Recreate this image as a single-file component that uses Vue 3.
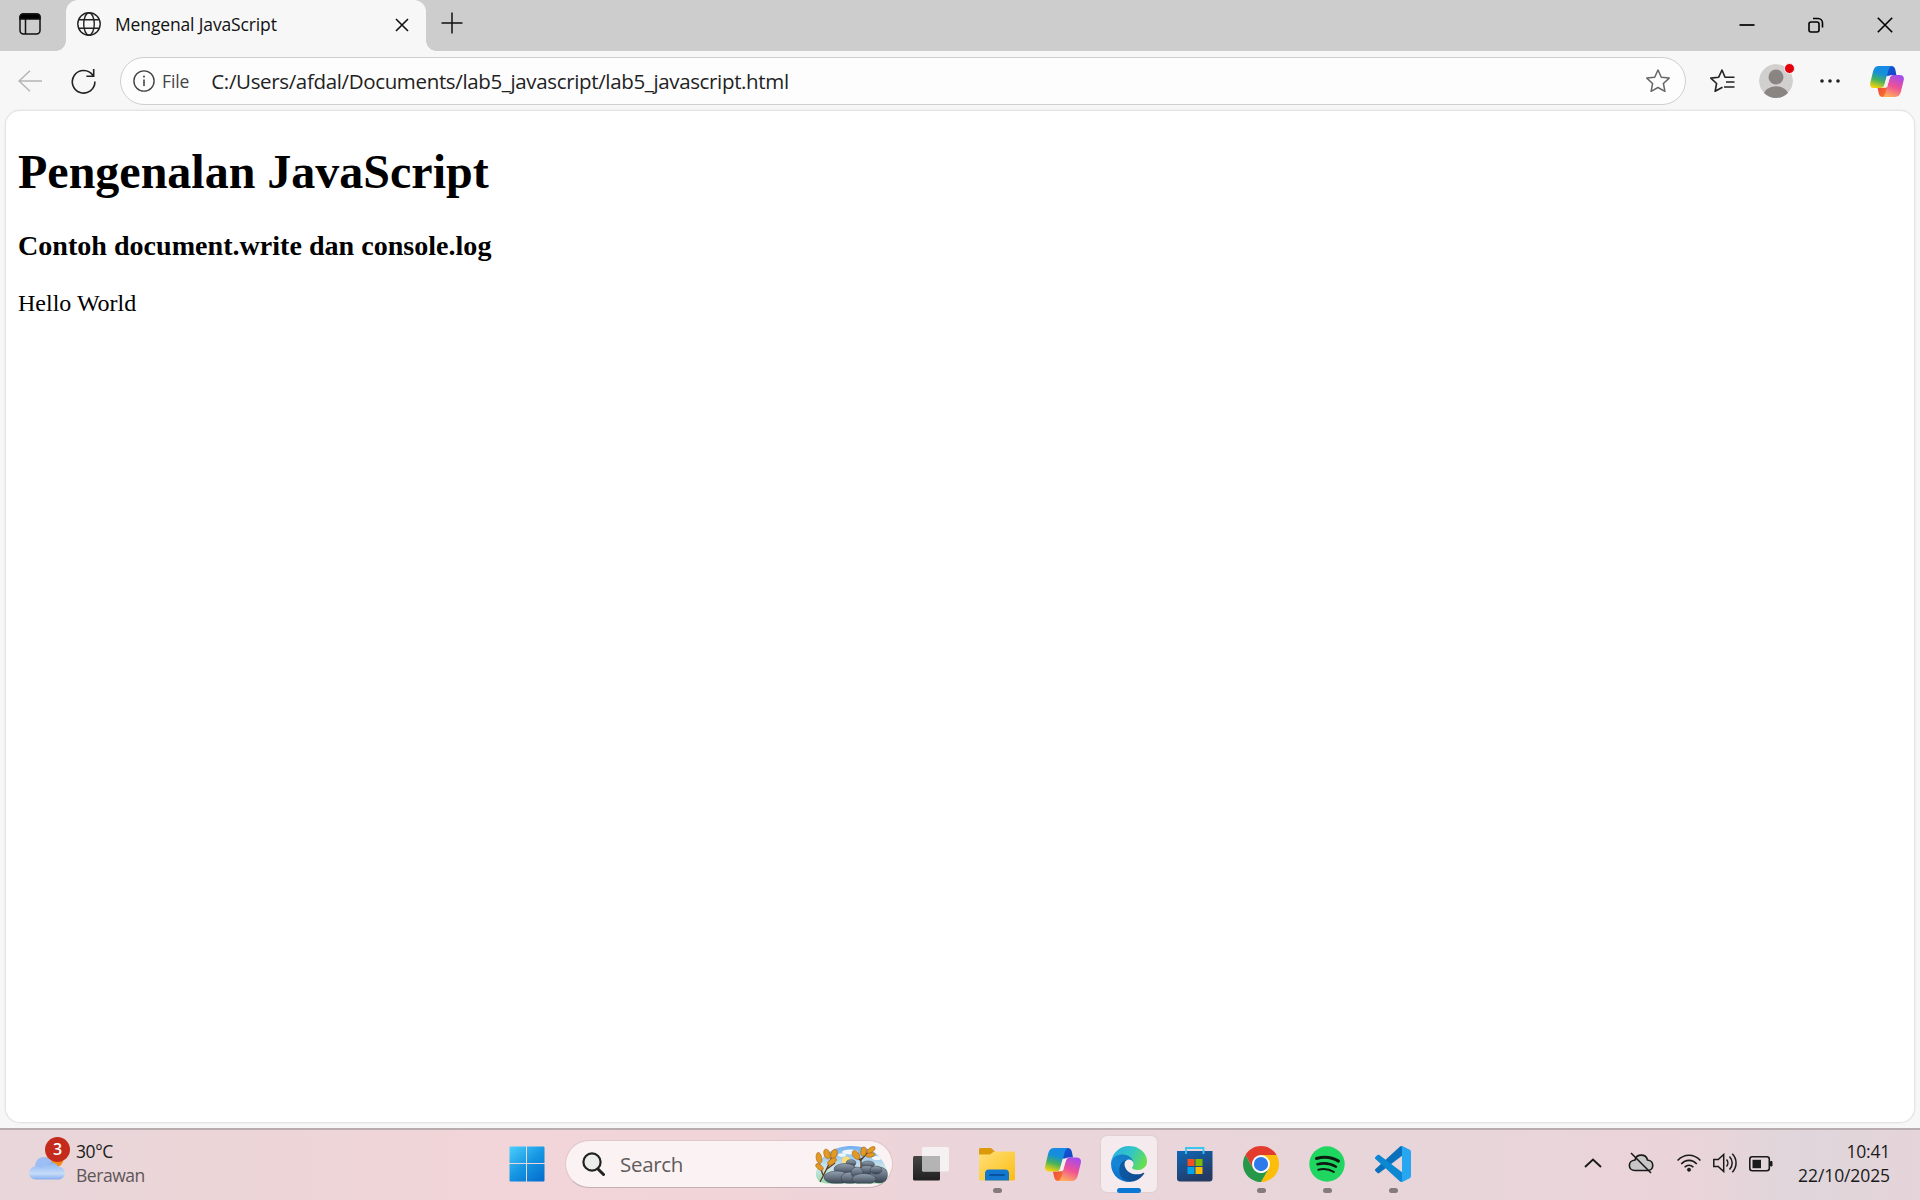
<script setup>
const url = 'C:/Users/afdal/Documents/lab5_javascript/lab5_javascript.html'
</script>

<template>
  <div class="screen">
    <svg width="0" height="0" class="defs" aria-hidden="true">
      <defs>
        <linearGradient id="cpA" x1="0.6" y1="0" x2="0.3" y2="1">
          <stop offset="0" stop-color="#1789e8" /><stop offset=".35" stop-color="#168fd8" />
          <stop offset=".65" stop-color="#45b15e" /><stop offset="1" stop-color="#f5d20b" />
        </linearGradient>
        <linearGradient id="cpB" x1="0.7" y1="0" x2="0.3" y2="1">
          <stop offset="0" stop-color="#a34cf0" /><stop offset=".5" stop-color="#ee5096" />
          <stop offset="1" stop-color="#ffb05a" />
        </linearGradient>
        <linearGradient id="cpC" x1="0" y1="0" x2="1" y2="1">
          <stop offset="0" stop-color="#0d5bd6" /><stop offset="1" stop-color="#1a3fc4" />
        </linearGradient>
        <linearGradient id="cpD" x1="0" y1="0" x2="1" y2="1">
          <stop offset="0" stop-color="#e8453f" /><stop offset="1" stop-color="#fb7b2c" />
        </linearGradient>
        <symbol id="copilot" viewBox="0 0 36 33">
          <path d="M17 0h5.500c2.600 0 3.800 1.500 4.400 4L28 9.500h-4.500c-2.500 0-4 1-5 4z" fill="url(#cpC)" />
          <path d="M19 33h-5.500c-2.600 0-3.800-1.500-4.400-4L8 23.500h4.500c2.500 0 4-1 5-4z" fill="url(#cpD)" />
          <path d="M9.500 0H24c-2.400 0-3.600 1.600-4.400 4.500l-4.200 15c-.8 2.800-2 4-4.400 4H4.500c-3.700 0-5.200-2.300-4.200-6L3.200 5.500C4.200 1.800 6 0 9.500 0z" fill="url(#cpA)" />
          <path d="M26.500 33H12c2.400 0 3.600-1.600 4.400-4.500l4.200-15c.8-2.800 2-4 4.400-4h6.500c3.700 0 5.200 2.300 4.200 6l-2.900 12c-1 3.700-2.800 5.500-6.300 5.500z" fill="url(#cpB)" />
          <path d="M19.500 10.500h2.600c-.7.800-1.100 1.700-1.500 3l-2.400 8.200c-.4 1-.9 1.500-1.800 1.500h-2.800c.9-.8 1.400-2 1.800-3.700l2-7.200c.4-1.200 1-1.800 2.100-1.800z" fill="#f6eef1" />
        </symbol>
      </defs>
    </svg>

    <header class="titlebar">
      <div class="workspace">
        <svg width="22" height="22" viewBox="0 0 22 22" fill="none" stroke="#111" stroke-width="1.500">
          <rect x="1" y="1" width="20" height="20" rx="3.500" /><path d="M6.500 6v15" />
          <path d="M1 6V4a3 3 0 0 1 3-3h14a3 3 0 0 1 3 3v2z" fill="#000" />
        </svg>
      </div>
      <div class="tab">
        <svg width="24" height="24" viewBox="0 0 24 24" fill="none" stroke="#222" stroke-width="1.400">
          <circle cx="12" cy="12" r="11.200" /><ellipse cx="12" cy="12" rx="5.300" ry="11.200" />
          <path d="M2 7.700h20M2 16.300h20" />
        </svg>
        <span class="tab-title">Mengenal JavaScript</span>
        <svg class="tab-close" width="14" height="14" viewBox="0 0 14 14" stroke="#111" stroke-width="1.600"><path d="M1 1l12 12M13 1L1 13" /></svg>
      </div>
      <svg class="plus" width="22" height="22" viewBox="0 0 22 22" stroke="#111" stroke-width="1.500"><path d="M11 .5v21M.5 11h21" /></svg>
      <div class="controls">
        <svg width="16" height="16" viewBox="0 0 16 16"><path d="M.5 8h15" stroke="#000" stroke-width="1.700" /></svg>
        <svg width="16" height="16" viewBox="0 0 16 16" fill="none" stroke="#000" stroke-width="1.600">
          <rect x="1" y="5" width="10" height="10" rx="2" /><path d="M5 1.500h5a4.500 4.500 0 0 1 4.500 4.500v4.500" />
        </svg>
        <svg width="16" height="16" viewBox="0 0 16 16" stroke="#000" stroke-width="1.600"><path d="M.8.8l14.400 14.400M15.200.8L.8 15.200" /></svg>
      </div>
    </header>

    <nav class="toolbar">
      <svg class="back" width="24" height="22" viewBox="0 0 24 22" fill="none" stroke="#b5b5b5" stroke-width="1.500"><path d="M24 11H1M12 .7L1 11l11 10.300" /></svg>
      <svg class="reload" width="25" height="26" viewBox="0 0 25 26" fill="none" stroke="#222" stroke-width="1.600">
        <path d="M23.900 13.500A11.300 11.300 0 1 1 22 7.500M22.700 1v7.300h-7.300" />
      </svg>
      <div class="address">
        <svg width="22" height="22" viewBox="0 0 22 22" fill="none" stroke="#444" stroke-width="1.400"><circle cx="11" cy="11" r="10.100" /><path d="M11 9.500v6.500" stroke-width="1.600" /><circle cx="11" cy="6.600" r=".4" /></svg>
        <span class="scheme">File</span>
        <span class="url">{{ url }}</span>
        <svg class="fav" width="24" height="24" viewBox="0 0 24 24" fill="none" stroke="#666" stroke-width="1.500" stroke-linejoin="round">
          <path d="M12 1l3.300 7.200 7.900.9-5.800 5.400 1.500 7.800L12 18.500l-6.900 3.800 1.500-7.800L.8 9.100l7.900-.9z" />
        </svg>
      </div>
      <svg class="favs" width="25" height="24" viewBox="0 0 25 24" fill="none" stroke="#222" stroke-width="1.600" stroke-linejoin="round">
        <path d="M24.500 8.200H15L12 1 8.700 8.200l-7.900.9 5.800 5.400-1.500 7.800 7.400-4M16 13h8.500M14 18h10.500" />
      </svg>
      <div class="avatar">
        <svg width="34" height="34" viewBox="0 0 34 34">
          <defs><clipPath id="av"><circle cx="17" cy="17" r="17" /></clipPath></defs>
          <g clip-path="url(#av)"><circle cx="17" cy="17" r="17" fill="#d2d0ce" /><circle cx="17" cy="13" r="7.500" fill="#8a8583" /><ellipse cx="17" cy="32" rx="12.500" ry="9.800" fill="#8a8583" /></g>
        </svg>
        <i class="dot"></i>
      </div>
      <svg class="more" width="20" height="4" viewBox="0 0 20 4" fill="#222"><circle cx="2" cy="2" r="1.800" /><circle cx="10" cy="2" r="1.800" /><circle cx="18" cy="2" r="1.800" /></svg>
      <svg class="cp" width="34" height="31"><use href="#copilot" /></svg>
    </nav>

    <main class="page">
      <h1>Pengenalan JavaScript</h1>
      <h3>Contoh document.write dan console.log</h3>
      <p>Hello World</p>
    </main>

    <footer class="taskbar">
      <div class="weather">
        <div class="weather-icon">
          <svg width="36" height="28" viewBox="0 0 36 28">
            <defs><linearGradient id="cl" x1="0" y1="0" x2="0" y2="1"><stop offset="0" stop-color="#8db4f5" /><stop offset=".65" stop-color="#c5dcf8" /><stop offset="1" stop-color="#86aef0" /></linearGradient></defs>
            <circle cx="26" cy="6" r="8.500" fill="#f58a1a" />
            <path d="M7 26a7 7 0 0 1-1-12.500C6.500 7 10.500 4 15 4c4 0 7 2.500 8 5z" fill="#9dbdf5" />
            <path d="M7 26.500c-9 0-9-13 0-13 3 0 4 .8 6 2 2.500-7 14-8 16-2 9 .5 9 13 0 13z" fill="url(#cl)" />
          </svg>
          <b class="badge">3</b>
        </div>
        <div class="weather-text"><span class="temp">30°C</span><span class="cond">Berawan</span></div>
      </div>

      <div class="apps">
        <div class="app">
          <svg width="36" height="36" viewBox="0 0 36 36">
            <defs><linearGradient id="wn" gradientUnits="userSpaceOnUse" x1="0" y1="0" x2="30" y2="36"><stop offset="0" stop-color="#4dd0fd" /><stop offset=".55" stop-color="#1595e2" /><stop offset="1" stop-color="#0670cf" /></linearGradient></defs>
            <path fill="url(#wn)" d="M1.500.5H17V17H.5V1.500a1 1 0 0 1 1-1zM18 .5h16.500a1 1 0 0 1 1 1V17H18zM.5 18H17v17.500H1.500a1 1 0 0 1-1-1zM18 18h17.500v16.500a1 1 0 0 1-1 1H18z" />
          </svg>
        </div>
        <div class="search">
          <svg width="23" height="24" viewBox="0 0 23 24" fill="#ececec" stroke="#222" stroke-width="2.200"><path d="M16 17l5.500 5.500" stroke-width="3" stroke-linecap="round" /><circle cx="10" cy="10" r="8.600" /></svg>
          <span class="search-label">Search</span>
          <svg class="scene" width="75" height="40" viewBox="0 0 75 40">
            <defs>
              <linearGradient id="sky" x1="0" y1="0" x2="0" y2="1"><stop offset="0" stop-color="#69aaf0" /><stop offset=".6" stop-color="#cfe6ea" /><stop offset="1" stop-color="#8fd9a8" /></linearGradient>
              <linearGradient id="rk" x1="0" y1="0" x2="0" y2="1"><stop offset="0" stop-color="#96a1b0" /><stop offset=".5" stop-color="#667282" /><stop offset="1" stop-color="#353f4c" /></linearGradient>
              <clipPath id="sc"><path d="M2 28C5 12 19 2 38 2c18 0 29 8 35 24 2 8-1 13.500-7 13.500H13C6 39.500 1 35 2 28z" /></clipPath>
            </defs>
            <g clip-path="url(#sc)">
              <rect width="75" height="40" fill="url(#sky)" />
              <g fill="#fff" opacity=".85"><ellipse cx="36" cy="8" rx="8" ry="2.500" /><ellipse cx="28" cy="11" rx="4" ry="1.800" /><ellipse cx="63" cy="14" rx="5" ry="2" /></g>
              <circle cx="32" cy="16.500" r="4" fill="#f9dd75" />
              <g fill="url(#rk)" stroke="#323c49" stroke-width=".5">
                <ellipse cx="37" cy="19" rx="4.800" ry="3.300" /><ellipse cx="31" cy="25" rx="11" ry="5.500" /><ellipse cx="54" cy="20.500" rx="6.500" ry="3.500" /><ellipse cx="53" cy="26" rx="8" ry="4.500" />
                <ellipse cx="23" cy="33.500" rx="13" ry="6.500" /><ellipse cx="36" cy="34" rx="9" ry="6" /><ellipse cx="43" cy="28.500" rx="6" ry="5.500" /><ellipse cx="65" cy="31" rx="9" ry="8" /><ellipse cx="50" cy="35" rx="12" ry="5.500" /><ellipse cx="62" cy="26" rx="6" ry="4" />
              </g>
            </g>
            <g fill="none" stroke="#5a3a20" stroke-width="1.300"><path d="M6 38c4-8 8-14 12-26M9 31L5 20M13 25l8-6M47 24V14M47 16l8-9M47 17l-6-6" /></g>
            <g fill="#e39a25" stroke="#a9640f" stroke-width=".6">
              <ellipse cx="13" cy="10" rx="3" ry="5" transform="rotate(-20 13 10)" /><ellipse cx="20" cy="10" rx="3" ry="5" transform="rotate(20 20 10)" /><ellipse cx="5" cy="14" rx="2.800" ry="5.500" transform="rotate(-10 5 14)" /><ellipse cx="18" cy="17.500" rx="2.600" ry="5" transform="rotate(55 18 17.500)" /><ellipse cx="5.500" cy="23" rx="2.400" ry="4.500" transform="rotate(-50 5.500 23)" />
              <ellipse cx="42" cy="11" rx="3" ry="5" transform="rotate(-35 42 11)" /><ellipse cx="49.500" cy="7.500" rx="2.700" ry="4.500" transform="rotate(8 49.500 7.500)" /><ellipse cx="57" cy="6" rx="2.300" ry="4.800" transform="rotate(55 57 6)" /><ellipse cx="56.500" cy="11" rx="2.100" ry="4.500" transform="rotate(80 56.500 11)" />
            </g>
          </svg>
        </div>
        <div class="app">
          <svg width="36" height="36" viewBox="0 0 36 36">
            <defs><linearGradient id="tv" x1="0" y1="0" x2="0" y2="1"><stop offset="0" stop-color="#454545" /><stop offset="1" stop-color="#202020" /></linearGradient></defs>
            <rect x="0" y="10" width="27" height="24.500" rx="1.500" fill="url(#tv)" /><rect x="9" y="1" width="27" height="24.500" rx="1.500" fill="#f7f7f7" opacity=".78" /><path d="M9 10h18v15.500H10.500A1.500 1.500 0 0 1 9 24z" fill="#b4b4b4" />
          </svg>
        </div>
        <div class="app">
          <svg width="36" height="36" viewBox="0 0 36 36">
            <defs><linearGradient id="fo" x1="0" y1="0" x2="1" y2="1"><stop offset="0" stop-color="#ffe07a" /><stop offset="1" stop-color="#fcbd13" /></linearGradient></defs>
            <path d="M0 3.500A1.500 1.500 0 0 1 1.500 2H12L16 5.500v8H0z" fill="#dc9a0b" /><path d="M0 8.500h11l4-3h19.500A1.500 1.500 0 0 1 36 7v26a1.500 1.500 0 0 1-1.500 1.500h-33A1.500 1.500 0 0 1 0 33z" fill="url(#fo)" />
            <path d="M6 34.500v-7a4 4 0 0 1 4-4h16a4 4 0 0 1 4 4v7z" fill="#1277cf" /><path d="M11 29h14" stroke="#07539e" stroke-width="1.800" stroke-linecap="round" />
          </svg>
          <i class="run"></i>
        </div>
        <div class="app"><svg width="36" height="33"><use href="#copilot" /></svg></div>
        <div class="app active">
          <svg width="36" height="36" viewBox="0 0 256 256">
            <defs>
              <linearGradient id="e1" x1="0" y1="0" x2="1" y2="0"><stop offset="0" stop-color="#0c59a4" /><stop offset="1" stop-color="#114a8b" /></linearGradient>
              <linearGradient id="e2" x1=".7" y1="0" x2=".3" y2="1"><stop offset="0" stop-color="#1478c0" /><stop offset=".5" stop-color="#1687d8" /><stop offset="1" stop-color="#0c6cc6" /></linearGradient>
              <linearGradient id="e3" x1="0" y1=".2" x2="1" y2=".6"><stop offset="0" stop-color="#2aaee0" /><stop offset=".5" stop-color="#32c5c8" /><stop offset="1" stop-color="#68e04c" /></linearGradient>
            </defs>
            <path transform="translate(-4.630 -4.920)" fill="url(#e2)" d="M110.340 246.340A79.200 79.200 0 0 1 87.600 225a80.720 80.720 0 0 1 29.530-120c3.120-1.470 8.450-4.130 15.540-4a32.350 32.350 0 0 1 25.690 13 31.880 31.880 0 0 1 6.360 18.660c0-.21 24.460-79.600-80-79.600-43.900 0-80 41.660-80 78.210a130.150 130.150 0 0 0 12.110 56 128 128 0 0 0 156.380 67.110 75.550 75.550 0 0 1-62.780-8z" />
            <path transform="translate(-4.630 -4.920)" fill="url(#e1)" d="M235.680 195.460a93.730 93.730 0 0 1-10.540 4.710 101.870 101.870 0 0 1-35.900 6.460c-47.320 0-88.540-32.550-88.540-74.320A31.480 31.480 0 0 1 117.130 105c-42.800 1.800-53.800 46.400-53.800 72.530 0 73.880 68.090 81.370 82.760 81.370 7.910 0 19.840-2.300 27-4.560l1.310-.44a128.340 128.340 0 0 0 66.600-52.800 4 4 0 0 0-5.320-5.640z" />
            <path fill="url(#e3)" d="M152.330 148.860c-.81 1.050-3.300 2.500-3.300 5.660 0 2.610 1.700 5.120 4.720 7.230 14.380 10 41.490 8.680 41.560 8.680a59.560 59.560 0 0 0 30.270-8.350A61.380 61.380 0 0 0 256 109.200c.26-22.410-8-37.310-11.340-43.910C223.460 23.840 177.720 0 128 0A128 128 0 0 0 0 126.200c.48-36.540 36.800-66.050 80-66.050 3.500 0 23.460.34 42 10.070 16.340 8.580 24.900 18.940 30.850 29.210 6.180 10.670 7.280 24.150 7.280 29.520s-2.740 13.330-7.800 19.910z" />
          </svg>
          <i class="run"></i>
        </div>
        <div class="app">
          <svg width="36" height="36" viewBox="0 0 36 36">
            <defs><linearGradient id="st" x1="0" y1="0" x2=".5" y2="1"><stop offset="0" stop-color="#0f68b8" /><stop offset="1" stop-color="#243a63" /></linearGradient></defs>
            <path d="M0 5h35.500v27.500A3 3 0 0 1 32.500 35.500H3A3 3 0 0 1 0 32.500z" fill="url(#st)" /><path d="M9 8V2h17.500v6" fill="none" stroke="#39c4f2" stroke-width="1.800" />
            <path fill="#f25022" d="M10.500 13h7v7h-7z" /><path fill="#7fba00" d="M18.500 13h7v7h-7z" /><path fill="#00a4ef" d="M10.500 21h7v7h-7z" /><path fill="#ffb900" d="M18.500 21h7v7h-7z" />
          </svg>
        </div>
        <div class="app">
          <svg width="36" height="36" viewBox="0 0 48 48">
            <path fill="#e33b2e" d="M24 12h20.780A24 24 0 0 0 3.220 12l10.390 18z" /><path fill="#fdbd0b" d="M34.390 30L24 48A24 24 0 0 0 44.780 12H24z" /><path fill="#279847" d="M13.610 30L3.220 12A24 24 0 0 0 24 48l10.390-18A12 12 0 0 1 13.610 30z" />
            <circle cx="24" cy="24" r="12" fill="#fff" /><circle cx="24" cy="24" r="9.500" fill="#2f7aea" />
          </svg>
          <i class="run"></i>
        </div>
        <div class="app">
          <svg width="36" height="36" viewBox="0 0 36 36" fill="none" stroke="#0d1a10" stroke-linecap="round">
            <circle cx="18" cy="18" r="17.700" fill="#1fd760" stroke="none" />
            <path d="M7.500 12.500c7-2 15.500-1.200 22 2.600" stroke-width="3" /><path d="M8.500 18.300c6-1.600 13-.9 18.500 2.400" stroke-width="2.500" /><path d="M9.300 23.700c5-1.200 10.800-.6 15.500 2.200" stroke-width="2" />
          </svg>
          <i class="run"></i>
        </div>
        <div class="app">
          <svg width="36" height="36" viewBox="0 0 100 100">
            <path fill="#0a72bd" d="M96.460 10.800L75.860.87A6.230 6.230 0 0 0 68.750 2.080L1.300 63.580a4.170 4.170 0 0 0 0 6.170l5.510 5.010a4.170 4.170 0 0 0 5.320.24L93.360 13.370A4.130 4.130 0 0 1 100 16.670v-.24a6.250 6.250 0 0 0-3.540-5.630z" />
            <path fill="#0c87d1" d="M96.460 89.200L75.860 99.130A6.230 6.230 0 0 1 68.750 97.920L1.300 36.420a4.170 4.170 0 0 1 0-6.170l5.510-5.010a4.170 4.170 0 0 1 5.320-.24L93.360 86.630A4.130 4.130 0 0 0 100 83.330v.24a6.250 6.250 0 0 1-3.540 5.630z" />
            <path fill="#27a7f2" d="M75.860 99.130A6.230 6.230 0 0 1 68.750 97.920C71.060 100.220 75 98.590 75 95.330V4.670C75 1.410 71.060-.22 68.750 2.080A6.230 6.230 0 0 1 75.860.87L96.460 10.770A6.250 6.250 0 0 1 100 16.400V83.600a6.250 6.250 0 0 1-3.540 5.630z" />
          </svg>
          <i class="run"></i>
        </div>
      </div>

      <div class="tray">
        <svg class="chev" width="18" height="10" viewBox="0 0 18 10" fill="none" stroke="#1a1a1a" stroke-width="1.900"><path d="M1 9l8-7.500L17 9" /></svg>
        <svg class="cloud" width="26" height="22" viewBox="0 0 26 22" fill="none" stroke="#1a1a1a" stroke-width="1.600">
          <path d="M7 18.500c-7.500 0-7.500-10 0-10.500 1.500-6.500 11-6.500 12.500 0 7 .5 7 10.500 0 10.500z" fill="#c9c6c8" /><path d="M3 1l20 20" />
        </svg>
        <svg class="wifi" width="24" height="18" viewBox="0 0 24 18" fill="none" stroke="#1a1a1a" stroke-width="1.600"><path d="M.6 6.500c6.500-7 16.300-7 22.800 0M4.200 10c4.500-4.800 11.100-4.800 15.600 0M7.600 13.300c2.600-2.700 6.200-2.700 8.800 0" /><circle cx="12" cy="15.700" r="1.600" fill="#1a1a1a" stroke-width=".8" /></svg>
        <svg class="vol" width="24" height="20" viewBox="0 0 24 20" fill="none" stroke="#1a1a1a" stroke-width="1.500"><path d="M.8 6.500h4.400l5.500-5v17l-5.500-5H.8zM13.500 6.500c1.800 2 1.800 5 0 7M16.500 3.500c3.600 3.800 3.600 9.200 0 13M19.300.8c5 5.300 5 13.100 0 18.400" /></svg>
        <svg class="bat" width="24" height="16" viewBox="0 0 24 16" fill="none" stroke="#1a1a1a" stroke-width="1.600"><rect x=".8" y=".8" width="19.500" height="14" rx="2.500" /><path d="M3.500 3.800h8.500v8.400h-8.500z" fill="#1a1a1a" stroke="none" /><path d="M21.500 5.500h1.500v4.500h-1.500z" fill="#1a1a1a" stroke-width="1" /></svg>
        <div class="clock"><span class="time">10:41</span><span class="date">22/10/2025</span></div>
      </div>
    </footer>
  </div>
</template>

<style>
body { margin: 0; }
</style>

<style scoped>
.screen { width: 1920px; height: 1200px; display: flex; flex-direction: column; overflow: hidden; background: #f7f7f7; font-family: "Open Sans", "Noto Sans", sans-serif; color: #1a1a1a; position: relative; }
.defs { position: absolute; }
svg { display: block; flex: none; }
span { white-space: nowrap; }

.titlebar { height: 51px; flex: none; background: #cdcdcd; display: flex; align-items: center; }
.workspace { width: 66px; height: 51px; display: flex; align-items: center; padding: 0 0 3px 19px; box-sizing: border-box; }
.tab { position: relative; width: 360px; height: 51px; box-sizing: border-box; background: #f7f7f7; border-radius: 12px 12px 0 0; display: flex; align-items: center; padding: 0 17px 3px 11px; }
.tab::before, .tab::after { content: ""; position: absolute; bottom: 0; width: 10px; height: 10px; }
.tab::before { left: -10px; background: radial-gradient(circle at 0 0, #cdcdcd 9.500px, #f7f7f7 10px); }
.tab::after { right: -10px; background: radial-gradient(circle at 100% 0, #cdcdcd 9.500px, #f7f7f7 10px); }
.tab-title { margin: -1px 0 0 14px; font-size: 17.500px; letter-spacing: -.14px; color: #111; }
.tab-close { margin-left: auto; margin-top: 2px; }
.plus { margin: 0 0 5px 15px; }
.controls { margin-left: auto; display: flex; gap: 53px; padding: 0 27px 1px 0; }

.toolbar { height: 60px; flex: none; display: flex; align-items: center; }
.back { margin: -1px 0 0 18px; }
.reload { margin-left: 29px; }
.address { width: 1566px; height: 48px; box-sizing: border-box; margin-left: 24px; border: 1.500px solid #cfcfcf; border-radius: 24px; background: #fdfdfd; display: flex; align-items: center; padding: 0 15px 0 12px; }
.scheme { margin-left: 7px; font-size: 17.500px; letter-spacing: -.1px; color: #444; font-weight: 500; }
.url { margin-left: 22px; font-size: 20.500px; letter-spacing: -.35px; color: #222; }
.fav { margin-left: auto; }
.favs { margin-left: 24px; }
.avatar { position: relative; margin-left: 24px; }
.dot { position: absolute; right: -2px; top: -1px; width: 9px; height: 9px; border-radius: 50%; background: #e3000b; border: 1px solid #f7f7f7; }
.more { margin-left: 27px; }
.cp { margin-left: 30px; }

.page { width: 1908px; height: 1011px; flex: none; box-sizing: border-box; margin-left: 6px; padding: 33px 12px 0; background: #fff; border-radius: 14px; box-shadow: 0 0 2px 1px #dedede; font-family: "Liberation Serif", serif; color: #000; }
h1, h3, p { margin: 0; white-space: nowrap; }
h1 { font-size: 48px; line-height: 55px; }
h3 { font-size: 28.080px; line-height: 32px; margin: 31px 0 28px; }
p { font-size: 24px; line-height: 27px; }

.taskbar { position: relative; margin-top: 6px; height: 72px; flex: none; box-sizing: border-box; border-top: 2px solid #b8acae; background: linear-gradient(90deg, #e8d6da 0, #ecd5d7 12%, #f1d5d8 25%, #f0d4d8 38%, #ead5da 52%, #e7d5da 75%, #ebd4d9 87%, #dfd6db 94%, #e5d4d9 100%); display: flex; }
.weather { width: 494px; display: flex; padding: 9px 0 0 29px; box-sizing: border-box; }
.weather-icon { position: relative; width: 36px; height: 28px; margin-top: 14px; }
.badge { position: absolute; left: 16px; top: -16px; width: 25px; height: 25px; border-radius: 50%; background: #c42b1c; color: #fff; font-size: 16px; line-height: 24px; font-weight: 600; text-align: center; }
.weather-text { display: flex; flex-direction: column; margin-left: 11px; font-size: 17.500px; line-height: 24px; }
.temp { letter-spacing: -.4px; }
.cond { color: #5e5558; letter-spacing: -.45px; }

.apps { display: flex; }
.app { position: relative; width: 66px; height: 70px; display: flex; align-items: center; justify-content: center; padding-bottom: 2px; box-sizing: border-box; z-index: 0; }
.app .run { position: absolute; left: 28.500px; bottom: 7px; width: 9px; height: 5px; border-radius: 2.500px; background: #857a7d; }
.active::before { content: ""; position: absolute; z-index: -1; left: 5px; top: 6px; width: 56px; height: 56px; border-radius: 6px; background: #f5ebee; box-shadow: 0 0 1px 1px #e1cfd3; }
.app.active .run { left: 21px; width: 24px; background: #0a78d4; }
.search { width: 328px; height: 48px; box-sizing: border-box; margin: 10px 5px 0 5px; border: 1.500px solid #dfc6ca; border-bottom-color: #c5afb2; border-radius: 24px; background: #fbf2f3; display: flex; align-items: center; padding: 0 3px 0 16px; }
.search-label { margin-left: 15px; font-size: 20.500px; letter-spacing: -.3px; color: #5f5b5c; }
.scene { margin-left: auto; }

.tray { margin-left: auto; display: flex; padding-right: 30px; }
.chev { margin-top: 28px; }
.cloud { margin: 22px 0 0 26px; }
.wifi { margin: 24px 0 0 23px; }
.vol { margin: 23px 0 0 12px; }
.bat { margin: 26px 0 0 12px; }
.clock { display: flex; flex-direction: column; align-items: flex-end; width: 117px; padding-top: 9px; font-size: 17.500px; line-height: 24px; }
.time { letter-spacing: -.2px; }
.date { letter-spacing: -.1px; }
</style>
